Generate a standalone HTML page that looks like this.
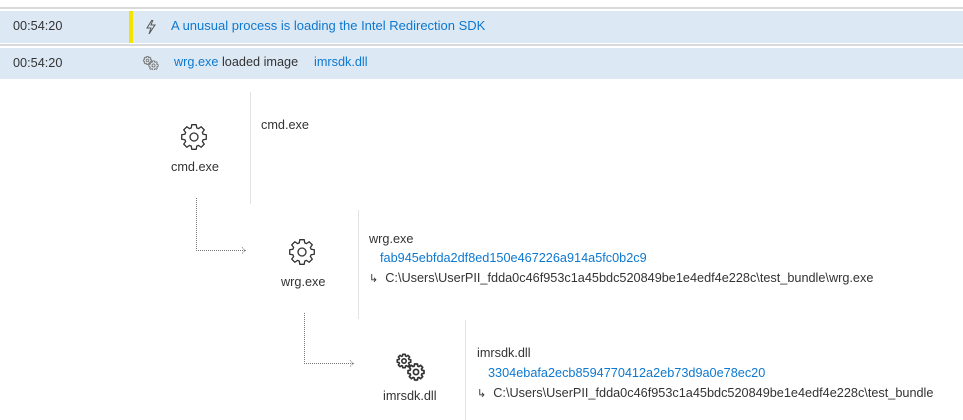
<!DOCTYPE html>
<html><head><meta charset="utf-8">
<style>
body{margin:0;width:963px;height:420px;background:#fff;position:relative;overflow:hidden;font-family:"Liberation Sans",sans-serif;font-size:12.7px;color:#333}
.a{position:absolute;white-space:nowrap}
.b{color:#0d78d0}
.vl{position:absolute;width:1px;background:#e3e3e3}
</style></head><body>
<div class="a" style="left:0;top:7px;width:963px;height:2px;background:#d7dadd"></div>
<div class="a" style="left:0;top:11px;width:963px;height:32px;background:#dce9f5"></div>
<div class="a" style="left:0;top:44px;width:963px;height:2px;background:#d7dadd"></div>
<div class="a" style="left:0;top:48px;width:963px;height:31px;background:#dce9f5"></div>
<div class="a" style="left:129px;top:11px;width:4px;height:32px;background:#f2e400"></div>
<div class="a" style="left:13px;top:19px">00:54:20</div>
<div class="a" style="left:13px;top:56px">00:54:20</div>
<svg class="a" style="left:144px;top:19px" width="14" height="16" viewBox="0 0 14 16"><path d="M8 1 L3 9 H7 L5 15 L11 6 H7 L9 1" fill="none" stroke="#555" stroke-width="1"/></svg>
<div class="a b" style="left:171px;top:18px;font-size:13px">A unusual process is loading the Intel Redirection SDK</div>
<svg class="a" style="left:143px;top:56px" width="16" height="14"><g class="g2"></g></svg>
<div class="a" style="left:174px;top:55px"><span class="b">wrg.exe</span> loaded image</div>
<div class="a b" style="left:314px;top:55px">imrsdk.dll</div>

<div class="vl" style="left:250px;top:92px;height:112px"></div>
<div class="vl" style="left:358px;top:210px;height:109px"></div>
<div class="vl" style="left:465px;top:320px;height:100px"></div>

<svg class="a" style="left:0;top:0" width="963" height="420">
<path d="M196.5 198 V250.5 H245 M242 247.5 L245.5 250.5 L242 253.5" fill="none" stroke="#777" stroke-width="1" stroke-dasharray="1 1"/>
<path d="M304.5 313 V363.5 H354 M350 360.5 L353.5 363.5 L350 366.5" fill="none" stroke="#777" stroke-width="1" stroke-dasharray="1 1"/>
<g id="g1"></g>
</svg>
<div class="a" style="left:171px;top:160px">cmd.exe</div>
<div class="a" style="left:281px;top:275px">wrg.exe</div>
<div class="a" style="left:383px;top:389px">imrsdk.dll</div>

<div class="a" style="left:261px;top:118px">cmd.exe</div>
<div class="a" style="left:369px;top:232px">wrg.exe</div>
<div class="a b" style="left:380px;top:251px">fab945ebfda2df8ed150e467226a914a5fc0b2c9</div>
<div class="a" style="left:369px;top:271px"><span style="font-size:11px">&#8627;</span>&nbsp; C:\Users\UserPII_fdda0c46f953c1a45bdc520849be1e4edf4e228c\test_bundle\wrg.exe</div>
<div class="a" style="left:477px;top:346px">imrsdk.dll</div>
<div class="a b" style="left:488px;top:366px">3304ebafa2ecb8594770412a2eb73d9a0e78ec20</div>
<div class="a" style="left:477px;top:386px"><span style="font-size:11px">&#8627;</span>&nbsp; C:\Users\UserPII_fdda0c46f953c1a45bdc520849be1e4edf4e228c\test_bundle</div>

<script>
function gear(cx,cy,s,col,sw){
 var p=[];
 for(var i=0;i<8;i++){var a=i*Math.PI/4;
  [[-0.29,9.5],[-0.18,12.5],[0.18,12.5],[0.29,9.5]].forEach(function(q){
   p.push((cx+Math.cos(a+q[0])*q[1]*s).toFixed(2)+","+(cy+Math.sin(a+q[0])*q[1]*s).toFixed(2));});
 }
 return '<polygon points="'+p.join(" ")+'" fill="none" stroke="'+col+'" stroke-width="'+sw+'" stroke-linejoin="round"/><circle cx="'+cx+'" cy="'+cy+'" r="'+(4*s)+'" fill="none" stroke="'+col+'" stroke-width="'+sw+'"/>';
}
var h=gear(194,137,1,"#333",1.3)+gear(302,252,1,"#333",1.3)+gear(404,361,0.55,"#333",1.6)+gear(416,372,0.65,"#333",1.7);
document.getElementById("g1").innerHTML=h;
document.querySelector(".g2").innerHTML=gear(4.5,4.5,0.33,"#777",0.9)+gear(10.5,9.5,0.38,"#777",0.9);
</script>
</body></html>
